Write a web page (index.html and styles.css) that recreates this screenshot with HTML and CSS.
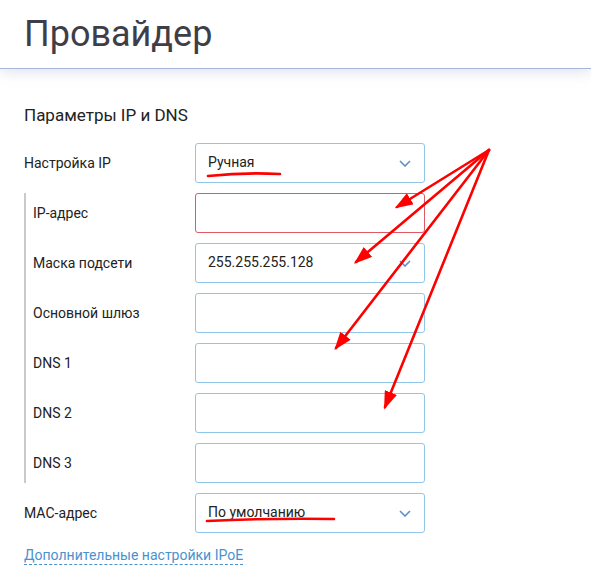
FILE: index.html
```html
<!DOCTYPE html>
<html lang="ru">
<head>
  <meta charset="UTF-8" />
  <meta name="viewport" content="width=device-width, initial-scale=1.0" />
  <title>Провайдер</title>
  <link rel="stylesheet" href="styles.css">
</head>
<body>
  <div class="header">
    <h1 class="title">Провайдер</h1>
  </div>

  <div class="content">
    <h2 class="section-title">Параметры IP и DNS</h2>

    <div class="row">
      <div class="label">Настройка IP</div>
      <div class="field select">
        <span>Ручная</span>
        <svg class="chevron" width="12" height="7" viewBox="0 0 12 7"><path d="M1 1l5 5 5-5" fill="none" stroke="#5d8fca" stroke-width="1.6"/></svg>
      </div>
    </div>

    <div class="group">
      <div class="row">
        <div class="label">IP-адрес</div>
        <div class="field error"></div>
      </div>
      <div class="row">
        <div class="label">Маска подсети</div>
        <div class="field select">
          <span>255.255.255.128</span>
          <svg class="chevron" width="12" height="7" viewBox="0 0 12 7"><path d="M1 1l5 5 5-5" fill="none" stroke="#5d8fca" stroke-width="1.6"/></svg>
        </div>
      </div>
      <div class="row">
        <div class="label">Основной шлюз</div>
        <div class="field"></div>
      </div>
      <div class="row">
        <div class="label">DNS 1</div>
        <div class="field"></div>
      </div>
      <div class="row">
        <div class="label">DNS 2</div>
        <div class="field"></div>
      </div>
      <div class="row">
        <div class="label">DNS 3</div>
        <div class="field"></div>
      </div>
    </div>

    <div class="row">
      <div class="label">MAC-адрес</div>
      <div class="field select">
        <span>По умолчанию</span>
        <svg class="chevron" width="12" height="7" viewBox="0 0 12 7"><path d="M1 1l5 5 5-5" fill="none" stroke="#5d8fca" stroke-width="1.6"/></svg>
      </div>
    </div>

    <a class="more-link" href="#">Дополнительные настройки IPoE</a>
  </div>

  <!-- red annotation marks drawn over the screenshot -->
  <svg class="marks" width="591" height="577" viewBox="0 0 591 577">
    <defs>
      <marker id="head" markerWidth="7" markerHeight="5" refX="6" refY="2.5" orient="auto" markerUnits="strokeWidth">
        <path d="M0 0L7 2.5L0 5z" fill="#ff0000"/>
      </marker>
    </defs>
    <g stroke="#ff0000" stroke-width="2.6" fill="none" stroke-linecap="round">
      <path d="M489 150L397 207" marker-end="url(#head)"/>
      <path d="M489 150L356 262" marker-end="url(#head)"/>
      <path d="M489 150L336 348" marker-end="url(#head)"/>
      <path d="M489 150L385 407" marker-end="url(#head)"/>
      <path d="M208 176Q244 172 280 174"/>
      <path d="M207 521Q270 518 334 519"/>
    </g>
  </svg>
</body>
</html>
```

FILE: styles.css
```css
body {
  margin: 0;
  font-family: Roboto, "Noto Sans", Arial, sans-serif;
  background: #fff;
  color: #222;
  position: relative;
}
.header {
  height: 68px;
  padding-left: 24px;
  box-shadow: 0 1px 0 #a9b6d8, 0 3px 14px rgba(160, 174, 218, 0.4);
}
.title {
  margin: 0;
  padding-top: 12px;
  font-size: 36px;
  font-weight: 400;
  line-height: 44px;
  color: #3e3e48;
}
.content {
  padding: 37px 24px 0 24px;
}
.section-title {
  margin: 0 0 18px 0;
  font-size: 17px;
  font-weight: 400;
  line-height: 20px;
  color: #222;
}
.row {
  display: grid;
  grid-template-columns: 171px 230px;
  align-items: center;
  height: 40px;
  margin-bottom: 10px;
}
.group {
  border-left: 2px solid #c9c9ce;
  padding-left: 7px;
}
.group .row {
  grid-template-columns: 162px 230px;
}
.label {
  font-size: 14px;
  color: #222;
}
.field {
  box-sizing: border-box;
  height: 40px;
  border: 1px solid #8fc6ea;
  border-radius: 3px;
  display: flex;
  align-items: center;
  justify-content: space-between;
  padding: 0 13px 0 12px;
  font-size: 14px;
  line-height: 16px;
  color: #222;
}
.field span {
  margin-top: -2px;
}
.field.error {
  border-color: #e05a66;
}
.chevron {
  display: block;
}
.more-link {
  display: inline-block;
  margin-top: 4px;
  font-size: 14px;
  line-height: 17px;
  color: #4a92ce;
  text-decoration: none;
  border-bottom: 1px dashed #4a92ce;
}
.marks {
  position: absolute;
  left: 0;
  top: 0;
  pointer-events: none;
}
```
